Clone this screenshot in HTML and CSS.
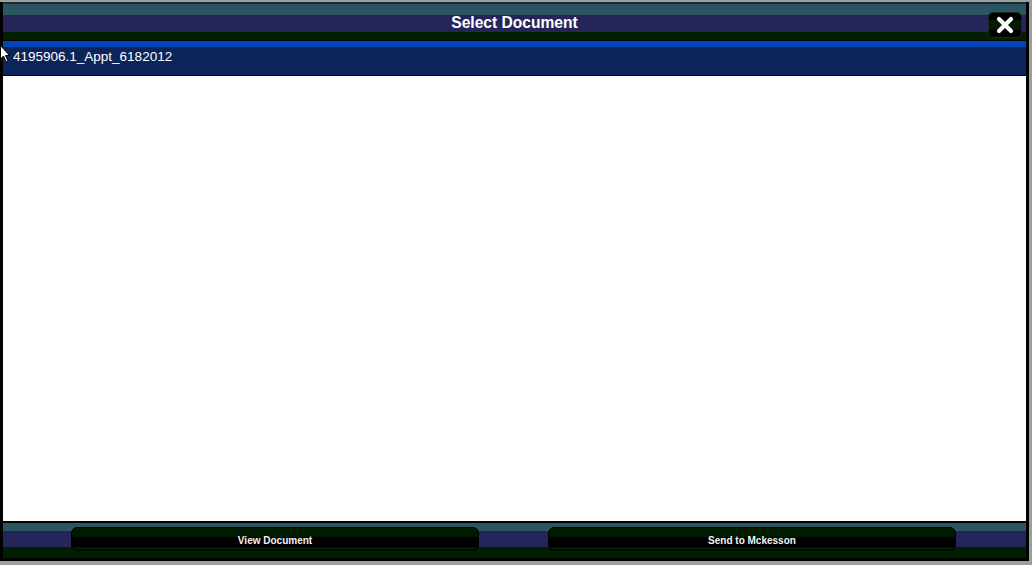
FILE: index.html
```html
<!DOCTYPE html>
<html>
<head>
<meta charset="utf-8">
<link rel="stylesheet" href="styles.css">
</head>
<body>
<div class="dialog">
  <div class="header">
    <span class="title">Select Document</span>
    <button class="close" aria-label="Close">
      <svg width="20" height="20" viewBox="0 0 20 20"><path d="M4 4 L16 16 M16 4 L4 16" stroke="#fff" stroke-width="4.2" stroke-linecap="round"/></svg>
    </button>
  </div>
  <div class="list">
    <div class="row selected">4195906.1_Appt_6182012</div>
    <svg class="cursor" width="10" height="19" viewBox="0 0 10 19"><path d="M0.5 0.5 L0.5 14 L3.5 11 L6 17 L8 16 L5.5 10.5 L9.5 10.5 Z" fill="#fff" stroke="#000" stroke-width="1"/></svg>
  </div>
  <div class="footer">
    <button class="btn">View Document</button>
    <button class="btn">Send to Mckesson</button>
  </div>
</div>
</body>
</html>
```
FILE: styles.css
```css
html, body {
  margin: 0;
  padding: 0;
  background: #9a9f9c;
  width: 1032px;
  height: 565px;
  overflow: hidden;
}
.dialog {
  margin-top: 2px;
  width: 1029px;
  height: 559px;
  background: #000;
  display: flex;
  flex-direction: column;
  font-family: "Liberation Sans", Arial, sans-serif;
}
.header {
  position: relative;
  flex: none;
  height: 38px;
  margin: 0 3px 0 3px;
  border-top: 2px solid #1d2a3c;
  box-sizing: border-box;
  background: linear-gradient(#2b5560 0, #2b5560 11px, #25255a 11px, #25255a 28px, #002000 28px, #002000 38px);
  display: flex;
  justify-content: center;
}
.title {
  color: #fff;
  font-weight: bold;
  font-size: 15.6px;
  line-height: 18px;
  margin-top: 10px;
}
.close {
  position: absolute;
  right: 4px;
  top: 8px;
  width: 34px;
  height: 26px;
  border: 1px solid #1a2a1a;
  border-radius: 5px;
  background: linear-gradient(#000 0, #000 7px, #021a02 7px, #021a02 17px, #000 17px);
  display: flex;
  align-items: center;
  justify-content: center;
  padding: 0;
}
.list {
  position: relative;
  flex: 1;
  margin: 0 3px;
  border-top: 1px solid #000;
  background: #fff;
  display: flex;
  flex-direction: column;
}
.row {
  height: 28px;
  line-height: 27px;
  color: #fff;
  font-size: 13.5px;
  padding-left: 10px;
  box-sizing: border-box;
}
.row.selected {
  border-top: 6px solid #0046b8;
  height: 35px;
  line-height: 18px;
  padding-top: 1px;
  background: #0b2459;
  border-bottom: 1px solid #000;
}
.cursor {
  position: absolute;
  left: -3px;
  top: 4px;
}
.footer {
  flex: none;
  height: 35px;
  margin: 2px 3px 3px 3px;
  box-sizing: border-box;
  background: linear-gradient(#2b5560 0, #2b5560 8px, #25255a 8px, #25255a 24px, #002000 24px, #002000 35px);
  display: flex;
  align-items: flex-start;
  padding: 4px 0 0 68px;
  gap: 69px;
}
.btn {
  width: 408px;
  height: 24px;
  padding: 2px 0 0 0;
  border: 1px solid #000;
  border-radius: 6px;
  background: linear-gradient(#001a00 0, #001a00 9px, #000 9px, #000 19px, #001a00 19px);
  color: #f4f4f4;
  font-family: "Liberation Sans", Arial, sans-serif;
  font-weight: bold;
  font-size: 10px;
  line-height: 22px;
}
```
